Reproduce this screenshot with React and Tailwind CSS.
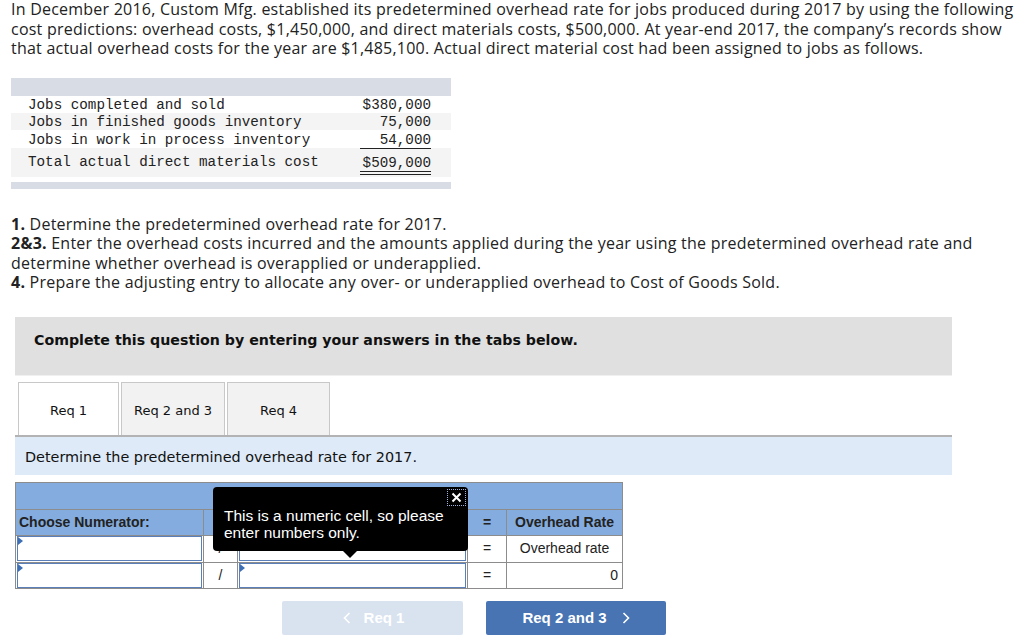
import React from "react";

const sans = { fontFamily: '"Open Sans", "Liberation Sans", sans-serif' };
const mono = { fontFamily: '"Liberation Mono", "Courier New", monospace' };
const verd = { fontFamily: '"DejaVu Sans", Verdana, sans-serif' };
const arial = { fontFamily: '"Liberation Sans", Arial, sans-serif' };

function Marker() {
  return (
    <span className="absolute left-0 top-0 w-0 h-0 border-t-[4px] border-b-[4px] border-l-[5px] border-t-transparent border-b-transparent border-l-[#3e6fb4]" />
  );
}

function InputCell() {
  return (
    <td className="border border-[#8c8c8c] p-0 h-[26px]">
      <div className="relative h-[25px] border border-[#5b7fb8] bg-white mx-[1px]">
        <Marker />
      </div>
    </td>
  );
}

export default function App() {
  return (
    <div className="w-[1024px] h-[636px] bg-white overflow-hidden text-[#222]">
      <div className="pl-[11px] text-[16px] leading-[19.5px] whitespace-nowrap tracking-[0.23px]" style={sans}>
        In December 2016, Custom Mfg. established its predetermined overhead rate for jobs produced during 2017 by using the following
        <br />
        cost predictions: overhead costs, $1,450,000, and direct materials costs, $500,000. At year-end 2017, the company’s records show
        <br />
        that actual overhead costs for the year are $1,485,100. Actual direct material cost had been assigned to jobs as follows.
      </div>

      <div className="ml-[11px] mt-[19px] w-[440px] text-[14.25px] text-[#222]" style={mono}>
        <div className="h-[18px] bg-[#d8dce5]" />
        <div className="flex items-center h-[17px] bg-white pl-[17px] pt-[4px]">
          <span className="w-[334px]">Jobs completed and sold</span>
          <span className="w-[69px] text-right">$380,000</span>
        </div>
        <div className="flex items-center h-[17px] bg-[#f4f4f4] pl-[17px] pt-[4px]">
          <span className="w-[334px]">Jobs in finished goods inventory</span>
          <span className="w-[69px] text-right">75,000</span>
        </div>
        <div className="flex items-center h-[18px] bg-white pl-[17px] pt-[4px]">
          <span className="w-[334px]">Jobs in work in process inventory</span>
          <span className="w-[69px] text-right">54,000</span>
        </div>
        <div className="flex h-[29px] bg-[#f4f4f4] pl-[17px]">
          <span className="w-[334px] pt-[4px]">Total actual direct materials cost</span>
          <span className="w-[71px] -ml-[2px] text-right pt-[4px] border-t border-t-[#222] h-[27px] border-b-[4px] border-b-[#222] border-double">$509,000</span>
        </div>
        <div className="h-[5px]" />
        <div className="h-[7px] bg-[#d8dce5]" />
      </div>

      <div className="px-[11px] mt-[26px] text-[16px] leading-[19.6px] whitespace-nowrap tracking-[0.24px]" style={sans}>
        <b className="font-bold">1.</b> Determine the predetermined overhead rate for 2017.
        <br />
        <b className="font-bold">2&amp;3.</b> Enter the overhead costs incurred and the amounts applied during the year using the predetermined overhead rate and
        <br />
        determine whether overhead is overapplied or underapplied.
        <br />
        <b className="font-bold">4.</b> Prepare the adjusting entry to allocate any over- or underapplied overhead to Cost of Goods Sold.
      </div>

      <div className="ml-[15px] mt-[24px] w-[937px]">
        <div className="h-[58px] bg-[#e0e0e0] flex items-center pl-[19px] pb-[10px] text-[14.2px] font-bold text-[#111]" style={verd}>
          Complete this question by entering your answers in the tabs below.
        </div>
        <div className="h-[9px] border-t border-[#f0f0f0]" />
        <div className="flex items-end h-[53px] border-b-2 border-[#b3b3b3] pl-[3px] gap-[2px] text-[13px] text-[#111]" style={verd}>
          <div className="w-[101px] h-[53px] bg-white border border-b-0 border-[#c8c8c8] flex items-center justify-center pt-[3px]">Req 1</div>
          <div className="w-[104px] h-[53px] bg-[#f2f2f2] border border-b-0 border-[#c8c8c8] flex items-center justify-center pt-[3px]">Req 2 and 3</div>
          <div className="w-[103px] h-[53px] bg-[#f2f2f2] border border-b-0 border-[#c8c8c8] flex items-center justify-center pt-[3px]">Req 4</div>
        </div>
        <div className="h-[38px] bg-[#deeaf7] flex items-center pl-[10px] pt-[4px] text-[14.4px] text-[#111]" style={verd}>
          Determine the predetermined overhead rate for 2017.
        </div>
      </div>

      <div className="relative ml-[15px] mt-[7px] w-[607px]" style={arial}>
        <table className="border-collapse table-fixed w-[607px] text-[14px] text-[#222]">
          <colgroup>
            <col className="w-[188px]" />
            <col className="w-[34px]" />
            <col className="w-[230px]" />
            <col className="w-[39px]" />
            <col className="w-[116px]" />
          </colgroup>
          <tbody>
            <tr className="h-[27px]">
              <td colSpan={5} className="bg-[#85acde] border border-[#8c8c8c]" />
            </tr>
            <tr className="h-[26px] bg-[#85acde] font-bold">
              <td className="border border-[#8c8c8c] pl-[3px] pt-[1px]">Choose Numerator:</td>
              <td className="border border-[#8c8c8c]" />
              <td className="border border-[#8c8c8c]" />
              <td className="border border-[#8c8c8c] text-center">=</td>
              <td className="border border-[#8c8c8c] text-center">Overhead Rate</td>
            </tr>
            <tr className="h-[27px]">
              <InputCell />
              <td className="border border-[#8c8c8c] text-center">/</td>
              <InputCell />
              <td className="border border-[#8c8c8c] text-center">=</td>
              <td className="border border-[#8c8c8c] text-center">Overhead rate</td>
            </tr>
            <tr className="h-[26px]">
              <InputCell />
              <td className="border border-[#8c8c8c] text-center">/</td>
              <InputCell />
              <td className="border border-[#8c8c8c] text-center">=</td>
              <td className="border border-[#8c8c8c] text-right pr-[4px]">0</td>
            </tr>
          </tbody>
        </table>

        <div className="absolute left-[198px] top-[5px] w-[255px] h-[64px] bg-black rounded-[4px] text-white text-[15.5px] leading-[17px] pl-[11px] pt-[20px]">
          This is a numeric cell, so please
          <br />
          enter numbers only.
          <div className="absolute right-[2px] top-[2px] w-[19px] h-[17px] border border-dotted border-[#9bb4e0] flex items-center justify-center">
            <svg width="11" height="11" viewBox="0 0 11 11">
              <path d="M1.5 1.5 L9.5 9.5 M9.5 1.5 L1.5 9.5" stroke="white" strokeWidth="2" />
            </svg>
          </div>
          <div className="absolute left-[129px] -bottom-[7px] w-0 h-0 border-l-[8px] border-r-[8px] border-t-[8px] border-l-transparent border-r-transparent border-t-black" />
        </div>
      </div>

      <div className="flex ml-[282px] mt-[12px] gap-[23px] text-[15px] font-bold text-white" style={arial}>
        <div className="w-[181px] h-[34px] bg-[#d9e3f0] rounded-[2px] flex items-center justify-center gap-[13px] pl-[2px]">
          <svg width="8" height="12" viewBox="0 0 8 12">
            <path d="M6.5 1 L1.5 6 L6.5 11" fill="none" stroke="white" strokeWidth="1.6" />
          </svg>
          <span>Req 1</span>
        </div>
        <div className="w-[180px] h-[34px] bg-[#4874b3] rounded-[2px] flex items-center justify-center gap-[15px]">
          <span>Req 2 and 3</span>
          <svg width="8" height="12" viewBox="0 0 8 12">
            <path d="M1.5 1 L6.5 6 L1.5 11" fill="none" stroke="white" strokeWidth="1.6" />
          </svg>
        </div>
      </div>
    </div>
  );
}
